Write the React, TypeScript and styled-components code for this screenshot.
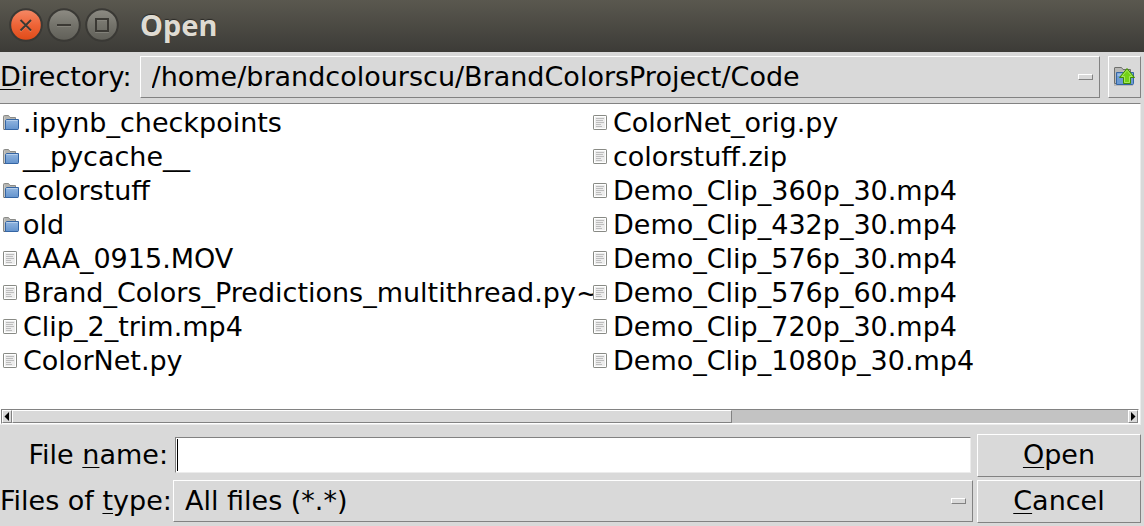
import React, { useState } from "react";
import styled, { createGlobalStyle, css } from "styled-components";

const GlobalStyle = createGlobalStyle`
  *, *::before, *::after { box-sizing: border-box; }
  body { margin: 0; background: #d9d9d9; }
  body, button, input, select {
    font-family: "DejaVu Sans", sans-serif;
    font-size: 27px;
    line-height: 34px;
    color: #000;
  }
`;

const raised = css`
  border: 1px solid;
  border-color: #fff #828282 #828282 #fff;
  background: #d9d9d9;
`;

const Dialog = styled.main`
  display: flex;
  flex-direction: column;
  min-height: 100vh;
  background: #d9d9d9;
`;

const TitleBar = styled.header`
  display: flex;
  align-items: center;
  gap: 4px;
  height: 52px;
  padding: 0 9px 2px;
  background: linear-gradient(#5a584f, #3c3b37);
`;

const WindowButton = styled.button`
  display: flex;
  width: 34px;
  height: 34px;
  padding: 0;
  border: 0;
  background: none;
`;

const Title = styled.h1`
  margin: 0 0 0 17px;
  font-family: "Noto Sans", sans-serif;
  font-size: 29px;
  line-height: 34px;
  font-weight: 700;
  color: #dfdbd2;
  text-shadow: 0 -1px 1px #2b2a27;
`;

const Mnemonic = styled.span`
  text-decoration: underline 1px;
  text-decoration-skip-ink: none;
  text-underline-offset: 3px;
`;

const DirectoryRow = styled.div`
  display: flex;
  align-items: center;
  gap: 8px;
  padding: 4px 3px 5px 0;
`;

const Label = styled.label`
  white-space: nowrap;
`;

const SelectFrame = styled.div`
  ${raised}
  display: flex;
  align-items: center;
  flex: 1;
  min-width: 0;
  height: 42px;
  padding-right: 6px;
`;

const Select = styled.select`
  appearance: none;
  flex: 1;
  min-width: 0;
  height: 40px;
  padding: 0 0 0 11px;
  border: 0;
  outline: 0;
  background: transparent;
`;

const Indicator = styled.span`
  ${raised}
  width: 15px;
  height: 6px;
`;

const UpButton = styled.button`
  ${raised}
  display: flex;
  align-items: center;
  justify-content: center;
  width: 33px;
  height: 42px;
  padding: 0 1px 2px 0;
`;

const ListPanel = styled.section`
  margin-right: 3px;
  border-top: 1px solid #828282;
  border-right: 1px solid #ececec;
  border-bottom: 1px solid #ececec;
  background: #fff;
`;

const FileList = styled.ul`
  display: grid;
  grid-auto-flow: column;
  grid-template-rows: repeat(8, 34px);
  grid-template-columns: 590px 1fr;
  margin: 0;
  padding: 2px 0 31px 3px;
  list-style: none;
  overflow: hidden;
`;

const FileItem = styled.li`
  display: flex;
  align-items: center;
  white-space: nowrap;
`;

const IconSlot = styled.span`
  display: flex;
  flex: none;
  width: 20px;
`;

const ScrollBar = styled.div`
  display: flex;
  height: 15px;
  margin: 0 1px;
  border: 1px solid;
  border-color: #828282 #fff #fff #828282;
  background: #c3c3c3;
`;

const ScrollArrow = styled.button`
  ${raised}
  display: flex;
  align-items: center;
  justify-content: center;
  width: 10px;
  height: 13px;
  padding: 0;
`;

const ScrollTrack = styled.div`
  flex: 1;
`;

const ScrollThumb = styled.div`
  ${raised}
  height: 13px;
`;

const Form = styled.form`
  display: grid;
  grid-template-columns: 168px 1fr 164px;
  align-items: start;
  row-gap: 3px;
  padding: 9px 3px 3px 0;
`;

const FieldLabel = styled(Label)`
  line-height: 42px;
  text-align: right;
`;

const FieldCell = styled.div<{ $inset?: boolean }>`
  display: flex;
  min-width: 0;
  padding: ${(p) => (p.$inset ? "3px 6px 0 7px" : "0 4px 0 5px")};
`;

const TextInput = styled.input`
  flex: 1;
  min-width: 0;
  height: 32px;
  padding: 0 1px;
  border: 0;
  outline: 0;
  background: #fff;
  caret-color: transparent;

  &:not(:placeholder-shown) {
    caret-color: #000;
  }
`;

const Caret = styled.span`
  width: 1px;
  height: 32px;
  background: #000;
`;

const InputFrame = styled.div`
  display: flex;
  align-items: center;
  flex: 1;
  min-width: 0;
  height: 36px;
  padding-left: 1px;
  border: 1px solid;
  border-color: #828282 #ececec #ececec #828282;
  background: #fff;
`;

const ActionButton = styled.button`
  ${raised}
  height: 43px;
  padding: 0 0 2px;
`;

const FolderIcon = () => (
  <svg width="16" height="16" viewBox="0 0 16 16" fill="none" aria-hidden="true">
    <defs>
      <linearGradient id="folder-blue" x1="0" y1="0" x2="0" y2="1">
        <stop offset="0" stopColor="#92b6e0" />
        <stop offset="1" stopColor="#6493cd" />
      </linearGradient>
    </defs>
    <path d="M.5 14V1.500Q.5 .500 1.500 .500H5.500L7 2.500H12.500V6" fill="#b4b4b0" stroke="#8a8b88" />
    <path d="M1.500 14.500V2" stroke="#c6c6c4" />
    <path d="M.5 14.500H15" stroke="#686b70" />
    <path d="M3.500 4.500H15.500V13.500Q15.500 14.500 14.500 14.500H2.500L2.500 5.500Z" fill="url(#folder-blue)" stroke="#3465a4" />
    <path d="M3.500 5.500H14.500" stroke="#b7cfeb" />
  </svg>
);

const FileIcon = () => (
  <svg width="14" height="16" viewBox="0 0 14 16" fill="none" aria-hidden="true">
    <rect x=".5" y=".5" width="13" height="14" rx=".6" fill="#fff" stroke="#888a85" />
    <rect x="2" y="2" width="10" height="11" fill="#ededed" />
    <path d="M3 3.500h8M3 5.500h7M3 7.500h8M3 9.500h5M3 11.500h6" stroke="#bdbdbd" />
  </svg>
);

const UpFolderIcon = () => (
  <svg width="22" height="22" viewBox="0 0 22 22" fill="none" aria-hidden="true">
    <path d="M1 20H20" stroke="#b9b9b9" strokeWidth="2" />
    <path d="M1.500 18.500V3Q1.500 2.500 2 2.500H8.500L10 4.500H17.500V9H4V18.500Z" fill="#b8b8b6" stroke="#6f706d" />
    <path d="M3.500 7.500H20.500V18.500Q20.500 19.500 19.500 19.500H3.500Z" fill="#6d9bd2" stroke="#3465a4" />
    <path d="M4.500 8.500H19.500V11H4.500Z" fill="#9abce3" />
    <path d="M14 3.500L21.500 12.500H17.500V18.500H10.500V12.500H6.500Z" fill="#73d216" stroke="#3f8a05" />
    <path d="M14 5.200L19.200 11.500H16.500V17.500H11.500V11.500H8.800Z" stroke="#a5e85d" />
  </svg>
);

type WindowKind = "close" | "minimize" | "maximize";

const glyphs: Record<WindowKind, string> = {
  close: "M11.500 12L22 22.500M22 12L11.500 22.500",
  minimize: "M10 17H24",
  maximize: "M11 11H23V23H11Z",
};

const WindowIcon = ({ kind }: { kind: WindowKind }) => {
  const close = kind === "close";
  return (
    <svg width="34" height="34" viewBox="0 0 34 34" fill="none" aria-hidden="true">
      <defs>
        <linearGradient id={`fill-${kind}`} x1="0" y1="0" x2="0" y2="1">
          <stop offset="0" stopColor={close ? "#f58a68" : "#8e8c84"} />
          <stop offset=".5" stopColor={close ? "#ee6437" : "#74736b"} />
          <stop offset="1" stopColor={close ? "#df4a17" : "#605f58"} />
        </linearGradient>
      </defs>
      <circle cx="17" cy="17" r="15.800" fill={`url(#fill-${kind})`} stroke="#3a3935" strokeWidth="2" />
      <path d={glyphs[kind]} transform="translate(0 1)" stroke={close ? "#f58b64" : "#8b8981"} strokeWidth="1.500" />
      <path d={glyphs[kind]} stroke="#3b3934" strokeWidth="2" />
    </svg>
  );
};

const ArrowIcon = ({ right }: { right?: boolean }) => (
  <svg width="6" height="9" viewBox="0 0 6 9" aria-hidden="true">
    <path d={right ? "M1 0L5.500 4.500L1 9Z" : "M5 0L.5 4.500L5 9Z"} fill="#000" />
  </svg>
);

const entries = [
  { name: ".ipynb_checkpoints", folder: true },
  { name: "__pycache__", folder: true },
  { name: "colorstuff", folder: true },
  { name: "old", folder: true },
  { name: "AAA_0915.MOV" },
  { name: "Brand_Colors_Predictions_multithread.py~" },
  { name: "Clip_2_trim.mp4" },
  { name: "ColorNet.py" },
  { name: "ColorNet_orig.py" },
  { name: "colorstuff.zip" },
  { name: "Demo_Clip_360p_30.mp4" },
  { name: "Demo_Clip_432p_30.mp4" },
  { name: "Demo_Clip_576p_30.mp4" },
  { name: "Demo_Clip_576p_60.mp4" },
  { name: "Demo_Clip_720p_30.mp4" },
  { name: "Demo_Clip_1080p_30.mp4" },
];

export default function App() {
  const [fileName, setFileName] = useState("");
  const viewShare = 64.5;

  return (
    <Dialog>
      <GlobalStyle />
      <TitleBar>
        <WindowButton aria-label="Close"><WindowIcon kind="close" /></WindowButton>
        <WindowButton aria-label="Minimize"><WindowIcon kind="minimize" /></WindowButton>
        <WindowButton aria-label="Maximize"><WindowIcon kind="maximize" /></WindowButton>
        <Title>Open</Title>
      </TitleBar>

      <DirectoryRow>
        <Label htmlFor="directory"><Mnemonic>D</Mnemonic>irectory:</Label>
        <SelectFrame>
          <Select id="directory">
            <option>/home/brandcolourscu/BrandColorsProject/Code</option>
          </Select>
          <Indicator />
        </SelectFrame>
        <UpButton aria-label="Parent directory"><UpFolderIcon /></UpButton>
      </DirectoryRow>

      <ListPanel>
        <FileList>
          {entries.map((entry) => (
            <FileItem key={entry.name}>
              <IconSlot>{entry.folder ? <FolderIcon /> : <FileIcon />}</IconSlot>
              {entry.name}
            </FileItem>
          ))}
        </FileList>
        <ScrollBar>
          <ScrollArrow aria-label="Scroll left"><ArrowIcon /></ScrollArrow>
          <ScrollTrack>
            <ScrollThumb style={{ width: `${viewShare}%` }} />
          </ScrollTrack>
          <ScrollArrow aria-label="Scroll right"><ArrowIcon right /></ScrollArrow>
        </ScrollBar>
      </ListPanel>

      <Form onSubmit={(e) => e.preventDefault()}>
        <FieldLabel htmlFor="file-name">File <Mnemonic>n</Mnemonic>ame:</FieldLabel>
        <FieldCell $inset>
          <InputFrame>
            {fileName === "" && <Caret />}
            <TextInput
              id="file-name"
              placeholder=" "
              value={fileName}
              onChange={(e) => setFileName(e.target.value)}
            />
          </InputFrame>
        </FieldCell>
        <ActionButton type="submit"><Mnemonic>O</Mnemonic>pen</ActionButton>

        <FieldLabel htmlFor="file-type">Files of <Mnemonic>t</Mnemonic>ype:</FieldLabel>
        <FieldCell>
          <SelectFrame>
            <Select id="file-type">
              <option>All files (*.*)</option>
            </Select>
            <Indicator />
          </SelectFrame>
        </FieldCell>
        <ActionButton type="button"><Mnemonic>C</Mnemonic>ancel</ActionButton>
      </Form>
    </Dialog>
  );
}
